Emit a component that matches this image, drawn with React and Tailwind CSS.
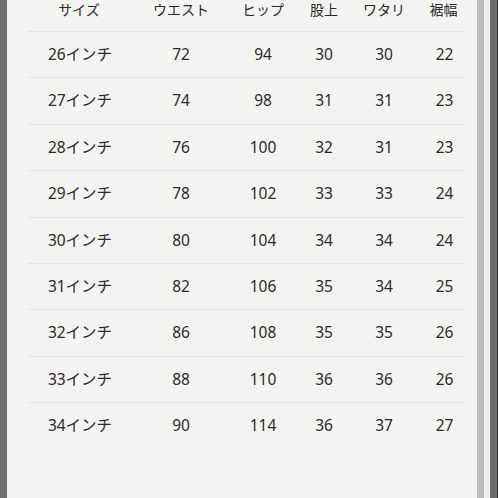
const rows = [
  ["26インチ", 72, 94, 30, 30, 22],
  ["27インチ", 74, 98, 31, 31, 23],
  ["28インチ", 76, 100, 32, 31, 23],
  ["29インチ", 78, 102, 33, 33, 24],
  ["30インチ", 80, 104, 34, 34, 24],
  ["31インチ", 82, 106, 35, 34, 25],
  ["32インチ", 86, 108, 35, 35, 26],
  ["33インチ", 88, 110, 36, 36, 26],
  ["34インチ", 90, 114, 36, 37, 27],
];

const head = ["サイズ", "ウエスト", "ヒップ", "股上", "ワタリ", "裾幅"];

const grid = "grid grid-cols-[102px_102px_62px_60px_60px_51px]";

export default function App() {
  return (
    <div
      className="flex h-[498px] w-[498px] overflow-hidden bg-[#f3f3f1] text-[#2b2b2b]"
      style={{ fontFamily: '"Noto Sans", "Noto Sans CJK JP", sans-serif' }}
    >
      <div className="w-[7px] shrink-0 bg-[#707070]" />
      <div className="flex-1 pl-[21px] pr-[12px]">
        <div className={`${grid} h-[31px] text-[14px] leading-[20px]`}>
          {head.map((h, i) => (
            <div key={h} className={`text-center ${i === 5 ? "pl-[8px]" : ""}`}>
              {h}
            </div>
          ))}
        </div>
        {rows.map((r) => (
          <div key={r[0]} className={`${grid} h-[46.4px] items-center border-t border-[#e4e4e2] text-[15.5px]`}>
            {r.map((c, i) => (
              <div key={i} className={`text-center ${i === 0 ? "pl-[2px]" : ""} ${i === 5 ? "pl-[10px]" : ""}`}>
                {c}
              </div>
            ))}
          </div>
        ))}
      </div>
      <div className="w-[7px] shrink-0 bg-[#bdbdbd]" />
      <div className="w-[6px] shrink-0 bg-[#efefef]" />
      <div className="w-[7px] shrink-0 bg-[#6e6e6e]" />
      <div className="w-[1px] shrink-0 bg-[#333]" />
    </div>
  );
}
